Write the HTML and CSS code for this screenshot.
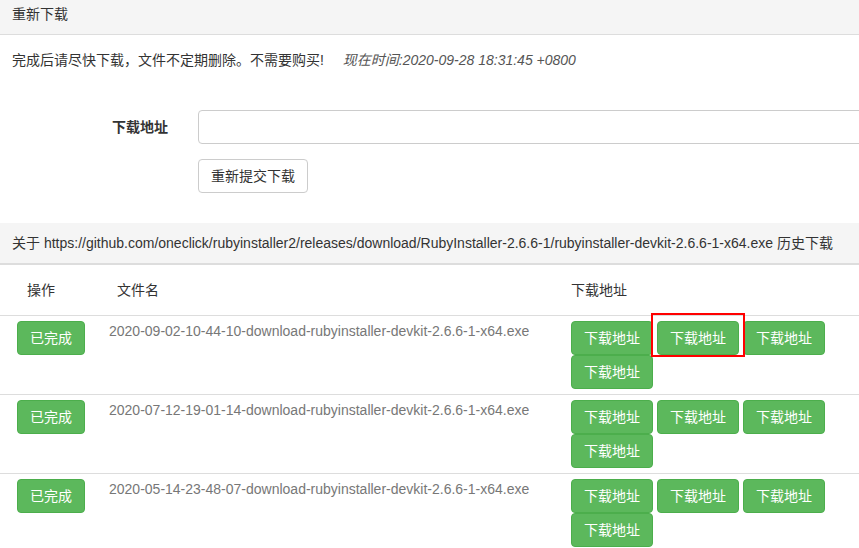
FILE: index.html
```html
<!DOCTYPE html>
<html lang="zh-CN">
<head>
<meta charset="utf-8">
<title>重新下载</title>
<link rel="stylesheet" href="styles.css">
</head>
<body>
<div class="page">
  <section class="panel">
    <div class="panel-heading">重新下载</div>
    <div class="panel-body">
      <p class="notice">完成后请尽快下载，文件不定期删除。不需要购买! <em class="time">现在时间:2020-09-28 18:31:45 +0800</em></p>
      <div class="form-row">
        <label class="form-label">下载地址</label>
        <input class="form-input" type="text">
      </div>
      <div class="form-row form-actions">
        <span class="form-label"></span>
        <button class="btn btn-default">重新提交下载</button>
      </div>
    </div>
  </section>

  <section class="panel panel-history">
    <div class="panel-heading heading-2">关于 https://github.com/oneclick/rubyinstaller2/releases/download/RubyInstaller-2.6.6-1/rubyinstaller-devkit-2.6.6-1-x64.exe 历史下载</div>
    <div class="table">
      <div class="tr thead">
        <div class="c1 th1">操作</div>
        <div class="c2 th2">文件名</div>
        <div class="c3">下载地址</div>
      </div>
      <div class="tr">
        <div class="c1"><button class="btn btn-success">已完成</button></div>
        <div class="c2 fname">2020-09-02-10-44-10-download-rubyinstaller-devkit-2.6.6-1-x64.exe</div>
        <div class="c3 links">
          <button class="btn btn-success">下载地址</button>
          <button class="btn btn-success marked">下载地址</button>
          <button class="btn btn-success">下载地址</button>
          <button class="btn btn-success">下载地址</button>
        </div>
      </div>
      <div class="tr">
        <div class="c1"><button class="btn btn-success">已完成</button></div>
        <div class="c2 fname">2020-07-12-19-01-14-download-rubyinstaller-devkit-2.6.6-1-x64.exe</div>
        <div class="c3 links">
          <button class="btn btn-success">下载地址</button>
          <button class="btn btn-success">下载地址</button>
          <button class="btn btn-success">下载地址</button>
          <button class="btn btn-success">下载地址</button>
        </div>
      </div>
      <div class="tr">
        <div class="c1"><button class="btn btn-success">已完成</button></div>
        <div class="c2 fname">2020-05-14-23-48-07-download-rubyinstaller-devkit-2.6.6-1-x64.exe</div>
        <div class="c3 links">
          <button class="btn btn-success">下载地址</button>
          <button class="btn btn-success">下载地址</button>
          <button class="btn btn-success">下载地址</button>
          <button class="btn btn-success">下载地址</button>
        </div>
      </div>
    </div>
  </section>
</div>
</body>
</html>
```

FILE: styles.css
```css
html, body {
  margin: 0;
  padding: 0;
  background: #fff;
}
body {
  font-family: "Liberation Sans", "Noto Sans CJK SC", sans-serif;
  font-size: 14px;
  line-height: 20px;
  color: #333;
  overflow: hidden;
}
.page {
  width: 859px;
  overflow: hidden;
}
.panel-heading {
  background: #f5f5f5;
  padding: 4px 12px 10px;
  border-bottom: 1px solid #ddd;
  white-space: nowrap;
}
.panel-body {
  padding: 15px 0 0;
}
.notice {
  margin: 0;
  padding: 0 12px;
}
.time {
  color: #555;
  margin-left: 15px;
}
.form-row {
  display: flex;
  align-items: center;
  margin-top: 40px;
}
.form-actions {
  margin-top: 15px;
}
.form-label {
  width: 168px;
  flex: none;
  text-align: right;
  font-weight: bold;
  margin-right: 30px;
}
.form-input {
  width: 760px;
  height: 34px;
  box-sizing: border-box;
  border: 1px solid #ccc;
  border-radius: 4px;
  flex: none;
  padding: 6px 12px;
  font: inherit;
}
.btn {
  font: inherit;
  line-height: 20px;
  padding: 6px 12px;
  border: 1px solid transparent;
  border-radius: 4px;
  box-sizing: border-box;
  height: 34px;
  cursor: pointer;
  white-space: nowrap;
}
.btn-default {
  background: #fff;
  border-color: #ccc;
  color: #333;
}
.btn-success {
  background: #5cb85c;
  border-color: #4cae4c;
  color: #fff;
}
.panel-history {
  margin-top: 30px;
}
.heading-2 {
  padding: 10px 12px;
  border-bottom: 2px solid #ddd;
}
.tr {
  display: flex;
  border-top: 1px solid #ddd;
  padding: 5px 0;
}
.tr.thead {
  border-top: none;
  padding: 15px 0;
}
.c1 {
  width: 109px;
  flex: none;
  box-sizing: border-box;
  padding-left: 17px;
}
.th1 {
  padding-left: 27px;
}
.c2 {
  width: 462px;
  flex: none;
  box-sizing: border-box;
}
.th2 {
  padding-left: 8px;
}
.fname {
  color: #777;
}
.c3 {
  flex: 1;
}
.links {
  display: flex;
  flex-wrap: wrap;
  column-gap: 4px;
  row-gap: 0;
  width: 288px;
}
.marked {
  position: relative;
}
.marked::after {
  content: "";
  position: absolute;
  top: -9px;
  left: -7px;
  right: -7px;
  bottom: -3px;
  border: 2px solid #f00;
}
```
